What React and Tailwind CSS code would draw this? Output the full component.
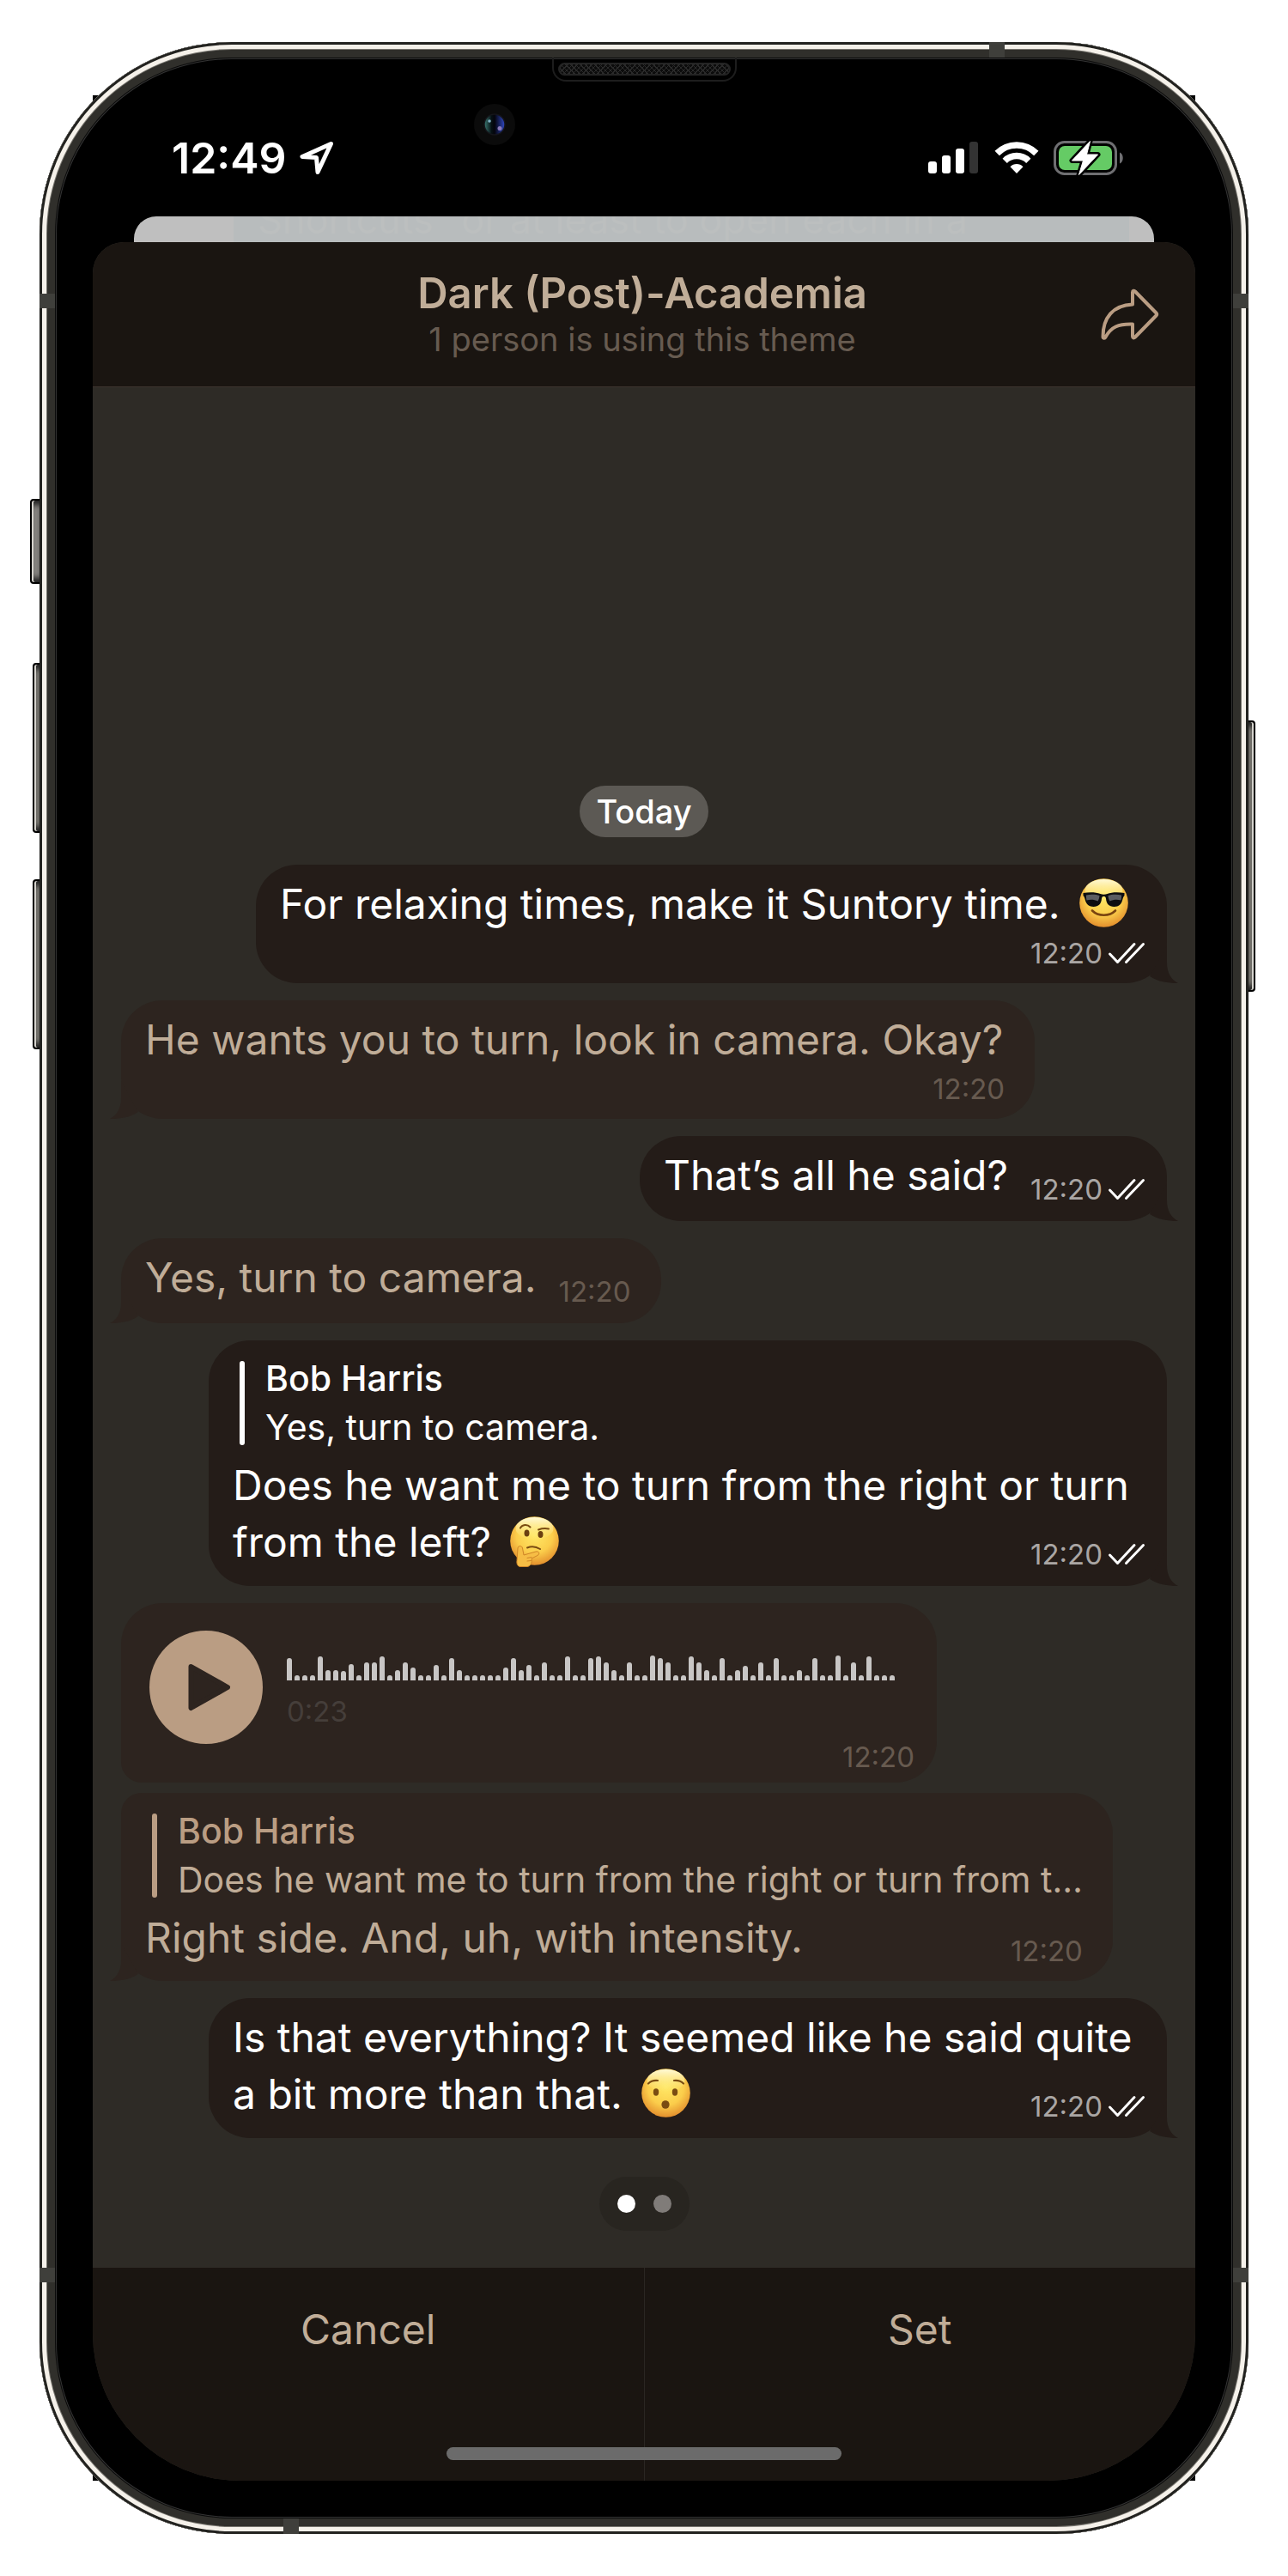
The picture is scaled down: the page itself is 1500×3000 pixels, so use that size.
const WAVE = [
  26, 6, 6, 6, 28, 12, 12, 11, 19, 6, 21, 21, 28, 6, 12, 21, 15, 6, 6, 18, 6, 26, 12, 6, 6, 6, 6, 6, 15, 26, 12, 18, 6,
  21, 6, 6, 28, 6, 6, 26, 28, 21, 12, 6, 21, 6, 6, 29, 26, 21, 6, 6, 28, 21, 12, 6, 26, 6, 12, 17, 6, 21, 6, 26, 6, 6,
  12, 6, 26, 6, 6, 29, 6, 21, 6, 28, 6, 6, 6,
];

function Face({ id, label, children }) {
  return (
    <svg viewBox="0 0 57 59" className="mx-[9px] inline-block h-[59px] w-[57px] align-[-12px]" role="img" aria-label={label}>
      <defs>
        <radialGradient id={id} cx="50%" cy="38%" r="62%">
          <stop offset="0" stopColor="#ffe866" />
          <stop offset="0.6" stopColor="#fbcd4b" />
          <stop offset="1" stopColor="#e38f2d" />
        </radialGradient>
        <linearGradient id={id + "-shine"} x1="0" y1="0" x2="0" y2="1">
          <stop offset="0" stopColor="#fffce0" stopOpacity="0.95" />
          <stop offset="1" stopColor="#fff38a" stopOpacity="0" />
        </linearGradient>
      </defs>
      <circle cx="28.5" cy="28.5" r="28.3" fill={`url(#${id})`} />
      <ellipse cx="28.5" cy="14" rx="22" ry="13" fill={`url(#${id}-shine)`} />
      {children}
    </svg>
  );
}

function Sunglasses() {
  return (
    <Face id="cool" label="😎">
      <path d="M4.5 17c7-1 15-1 20 1 2.500 1 5.500 1 8 0 5-2 13-2 20-1v3c-1 1-1.500 2-2 4-1.200 6-4.500 9-10 9-6 0-9-3.500-9.500-9.500C30.700 21.500 29.800 21 28.500 21s-2.200.5-2.500 2.500C25.500 29.500 22.500 33 16.500 33c-5.500 0-8.800-3-10-9-.5-2-1-3-2-4z" fill="#0d0e10" />
      <path d="M8 19.500c5-1 11-1 15.500.5-.2 3-1 5-2 6.500-4-2-9-2-13-1-.3-1.500-.7-4-.5-6zM49 19.500c-5-1-11-1-15.500.5.2 3 1 5 2 6.500 4-2 9-2 13-1 .3-1.500.7-4 .5-6z" fill="#5b5d61" />
      <path d="M15 37.500c7 7 20 7 27 0" fill="none" stroke="#7a4410" strokeWidth="2.600" strokeLinecap="round" />
    </Face>
  );
}

function Thinking() {
  return (
    <Face id="think" label="🤔">
      <g fill="none" stroke="#7a4c12" strokeLinecap="round" strokeWidth="2">
        <path d="M12 13.500c2-4 8-5 11.500-1" />
        <path d="M33 15.500c4-1.500 8-1.800 12-1" />
        <path d="M20 36.500c5-2 10-1.500 15 1.500" />
      </g>
      <ellipse cx="19.500" cy="19.500" rx="3" ry="4" fill="#6b3f10" />
      <ellipse cx="35.500" cy="21" rx="3" ry="4" fill="#6b3f10" />
      <path d="M9 37c0-3 5-3.500 5.500 0l1.500 8 14-4c4-1 5 3 2 4.500l-7 3.500c1 5-1 9-5 9.500H12c-3 0-4.500-3-4-7z" fill="#f6bd45" stroke="#cf8527" strokeWidth="1" />
      <path d="M20 48.500l5-1M20 52l4.500-.5" fill="none" stroke="#cf8527" strokeWidth="1" strokeLinecap="round" />
    </Face>
  );
}

function Hushed() {
  return (
    <Face id="hush" label="😯">
      <g fill="none" stroke="#7a4c12" strokeLinecap="round" strokeWidth="2.200">
        <path d="M8 17.500c3-3 6.500-4 11-3.500" />
        <path d="M49 17.500c-3-3-6.500-4-11-3.500" />
      </g>
      <ellipse cx="17" cy="27.500" rx="3.200" ry="4.200" fill="#7a4c12" />
      <ellipse cx="39" cy="27.500" rx="3.200" ry="4.200" fill="#7a4c12" />
      <ellipse cx="28" cy="42" rx="4.600" ry="4.800" fill="#7a4c12" />
    </Face>
  );
}

function Checks() {
  return (
    <svg viewBox="0 0 44 26" className="h-[26px] w-[44px]" fill="none" stroke="#fff" strokeWidth="3" strokeLinecap="round" strokeLinejoin="round" aria-hidden="true">
      <path d="M2.500 14 11.500 23.500 31 2.500M21.500 23.500 41.500 2.500" />
    </svg>
  );
}

function Tail({ out }) {
  return out ? (
    <svg viewBox="0 0 36 44" className="absolute -right-[13px] bottom-0 h-[44px] w-[36px]" fill="#241c18" aria-hidden="true">
      <path d="M23 0V20C23 32 28 40 36 44C23 44 12 42 3 36Z" />
    </svg>
  ) : (
    <svg viewBox="0 0 36 44" className="absolute bottom-0 -left-[13px] h-[44px] w-[36px]" fill="#2d241f" aria-hidden="true">
      <path d="M13 0V20C13 32 8 40 0 44C13 44 24 42 33 36Z" />
    </svg>
  );
}

function Bubble({ out, tail = true, className = "", children }) {
  return (
    <div
      className={
        "relative pl-[28px] text-[48px] leading-[66px] " +
        (out ? "self-end bg-[#241c18] pr-[25px] text-white " : "self-start bg-[#2d241f] pr-[35px] text-[#c0ad98] ") +
        className
      }
    >
      {tail && <Tail out={out} />}
      {children}
    </div>
  );
}

function Meta({ out, className = "" }) {
  return (
    <span className={"flex items-center gap-[6px] text-[33px] leading-[40px] " + (out ? "text-[#aaa6a4] " : "text-[#675a4f] ") + className}>
      <time>12:20</time>
      {out && <Checks />}
    </span>
  );
}

function Quote({ out, text }) {
  return (
    <blockquote className="mt-[3px] mb-[6px] ml-2 flex gap-6 text-[41px] leading-[57px]">
      <span className={"my-2 w-[6px] rounded-full " + (out ? "bg-white" : "bg-[#ba9d83]")} />
      <div className="min-w-0 flex-1">
        <p className={"font-medium " + (out ? "text-white" : "text-[#ba9d83]")}>Bob Harris</p>
        <p className="truncate">{text}</p>
      </div>
    </blockquote>
  );
}

function StatusBar() {
  return (
    <div className="mt-[59px] mb-[38px] flex h-[60px] items-center justify-between pr-[82px] pl-[92px] text-white">
      <div className="flex items-center gap-[14px]">
        <time className="text-[50px] leading-[60px] font-semibold">12:49</time>
        <svg viewBox="0 0 42 40" className="h-[40px] w-[42px]" fill="none" stroke="#fff" strokeWidth="5" strokeLinejoin="round" aria-label="Location">
          <path d="M37.500 3.500 4 18.500 20.500 19.500 22 36.500Z" />
        </svg>
      </div>
      <div className="flex items-center gap-[17px]">
        <svg viewBox="0 0 60 40" className="h-[40px] w-[60px]" fill="#fff" aria-label="Signal">
          <rect x="0" y="24" width="10" height="14" rx="3" />
          <rect x="16" y="17" width="10" height="21" rx="3" />
          <rect x="32" y="9" width="10" height="29" rx="3" />
          <rect x="48" y="1" width="10" height="37" rx="3" fill="#333" />
        </svg>
        <svg viewBox="0 0 52 40" className="h-[40px] w-[52px]" aria-label="Wi-Fi">
          <g fill="none" stroke="#fff" strokeWidth="7.500">
            <path d="M3.200 14.500a32 32 0 0 1 45.600 0" />
            <path d="M12.200 23.300a19.600 19.600 0 0 1 27.600 0" />
          </g>
          <path d="M26 38l-7.500-7.800a10.500 10.500 0 0 1 15 0z" fill="#fff" />
        </svg>
        <svg viewBox="0 0 83 42" className="h-[42px] w-[83px]" aria-label="Battery charging">
          <rect x="1.500" y="2.500" width="71" height="37" rx="11" fill="none" stroke="#6f6f72" strokeWidth="3" />
          <path d="M77 14.500c5 2 5 11 0 13z" fill="#6f6f72" />
          <rect x="6" y="7" width="62" height="28" rx="7" fill="#65cb65" />
          <path d="M42.500 1.500 21.500 24H34.500L29.500 40.500 51.500 17H38.500Z" fill="#000" stroke="#000" strokeWidth="6" strokeLinejoin="round" />
          <path d="M42.500 1.500 21.500 24H34.500L29.500 40.500 51.500 17H38.500Z" fill="#fff" stroke="#fff" strokeWidth="1" strokeLinejoin="round" />
        </svg>
      </div>
    </div>
  );
}

function Speaker() {
  return (
    <div className="mx-auto h-[28px] w-[215px] rounded-b-[16px] border-2 border-t-0 border-[#1d1d1d] px-[5px] pt-[6px]">
      <div className="h-[15px] rounded-full border-2 border-[#242424] bg-[#0c0c0c] bg-[repeating-linear-gradient(45deg,#2a2a2a_0_1px,transparent_1px_4px),repeating-linear-gradient(-45deg,#2a2a2a_0_1px,transparent_1px_4px)]" />
    </div>
  );
}

function Camera() {
  return (
    <svg viewBox="0 0 50 50" className="absolute top-[71px] left-[505px] h-[50px] w-[50px]" aria-hidden="true">
      <defs>
        <linearGradient id="lens" x1="0" y1="0" x2="1" y2="0">
          <stop offset="0" stopColor="#3b7a73" />
          <stop offset="0.35" stopColor="#061013" />
          <stop offset="0.5" stopColor="#04040c" />
          <stop offset="1" stopColor="#3149c4" />
        </linearGradient>
      </defs>
      <circle cx="25" cy="25" r="24" fill="#0b0b0b" />
      <circle cx="25" cy="25" r="12" fill="url(#lens)" stroke="#15151a" strokeWidth="1.500" />
      <circle cx="19" cy="21" r="1.800" fill="#7fb0c4" />
      <circle cx="31" cy="29.500" r="2.500" fill="#8a7ab8" />
    </svg>
  );
}

function Hardware() {
  const key = "absolute border-2 border-black ";
  return (
    <div aria-hidden="true">
      <div className="absolute inset-[62px] bg-black" />
      <div className={key + "top-[532px] -left-[11px] h-[99px] w-[14px] rounded-l-[4px] bg-[#85837f] shadow-[inset_2px_0_0_#d5d3cd,inset_0_8px_6px_-3px_#222,inset_0_-8px_6px_-3px_#222]"} />
      <div className={key + "top-[723px] -left-[8px] h-[198px] w-[11px] rounded-l-[4px] bg-[#77756f] shadow-[inset_2px_0_0_#d5d3cd,inset_0_8px_6px_-3px_#222,inset_0_-8px_6px_-3px_#222]"} />
      <div className={key + "top-[975px] -left-[8px] h-[198px] w-[11px] rounded-l-[4px] bg-[#77756f] shadow-[inset_2px_0_0_#d5d3cd,inset_0_8px_6px_-3px_#222,inset_0_-8px_6px_-3px_#222]"} />
      <div className={key + "top-[790px] -right-[8px] h-[316px] w-[11px] rounded-r-[4px] bg-[#77756f] shadow-[inset_-2px_0_0_#d5d3cd,inset_0_8px_6px_-3px_#222,inset_0_-8px_6px_-3px_#222]"} />
    </div>
  );
}

function Bands() {
  return (
    <div aria-hidden="true">
      <div className="absolute top-[293px] left-0 h-[17px] w-[18px] bg-[#3f3f3b]" />
      <div className="absolute top-[293px] right-0 h-[17px] w-[18px] bg-[#3f3f3b]" />
      <div className="absolute bottom-[293px] left-0 h-[17px] w-[18px] bg-[#3f3f3b]" />
      <div className="absolute right-0 bottom-[293px] h-[17px] w-[18px] bg-[#3f3f3b]" />
      <div className="absolute top-0 right-[284px] h-[18px] w-[18px] bg-[#3f3f3b]" />
      <div className="absolute bottom-0 left-[284px] h-[18px] w-[18px] bg-[#3f3f3b]" />
    </div>
  );
}

function Header() {
  return (
    <header className="relative rounded-t-[36px] border-b border-[#3d342f] bg-[#1a1511] pt-[30px] pr-1 pb-[32px] text-center">
      <h1 className="text-[49px] leading-[60px] font-semibold text-[#c0ad98]">Dark (Post)-Academia</h1>
      <p className="text-[38px] leading-[46px] text-[#675b50]">1 person is using this theme</p>
      <button type="button" aria-label="Share theme" className="absolute top-[54px] right-[42px]">
        <svg viewBox="0 0 68 60" className="h-[60px] w-[68px]" fill="none" stroke="#ba9d83" strokeWidth="4" strokeLinejoin="round" strokeLinecap="round">
          <path d="M37 4.500C37 2.500 38.500 2.200 40 3.500L64.500 28.500Q66 30 64.500 31.500L40 56.500C38.500 58 37 57.500 37 55.500V41.500C20 41 12 45 5.500 56.500C4.500 58.500 2.500 58 2.500 56C2.500 34 14 19.500 37 18.500Z" />
        </svg>
      </button>
    </header>
  );
}

function VoiceMessage() {
  return (
    <Bubble tail={false} className="-mb-2 rounded-[48px] rounded-bl-[24px] pt-[32px] pb-[10px]">
      <div className="flex gap-[28px] pr-[14px] pl-[5px]">
        <button type="button" aria-label="Play" className="flex h-[132px] w-[132px] shrink-0 items-center justify-center rounded-full bg-[#ba9d83]">
          <svg viewBox="0 0 50 56" className="ml-[8px] h-[56px] w-[50px]" fill="#2d241f" stroke="#2d241f" strokeWidth="6" strokeLinejoin="round">
            <path d="M3.500 4 46 28 3.500 52Z" />
          </svg>
        </button>
        <div>
          <svg viewBox="0 0 708 30" className="mt-[28px] h-[30px] w-[708px]" fill="#c8c6c5" aria-label="Waveform">
            {WAVE.map((h, i) => (
              <path key={i} d={`M${i * 9} 30V${33 - h}a3 3 0 0 1 6 0V30z`} />
            ))}
          </svg>
          <p className="mt-[16px] text-[33px] leading-[40px] text-[#453e3a]">0:23</p>
        </div>
      </div>
      <Meta className="-mt-[5px] -mr-[9px] justify-end" />
    </Bubble>
  );
}

const ROUND = "max-w-[1116px] rounded-[48px] pt-[13px] ";

export default function App() {
  return (
    <main className="bg-white px-[46px] py-[49px] font-['Inter','Liberation_Sans',sans-serif]">
      <div className="relative">
        <Hardware />
        <div className="relative overflow-hidden rounded-[224px] bg-black px-[62px] pt-[18px] pb-[62px] shadow-[inset_0_0_0_3px_#22221f,inset_0_0_0_8px_#f5f1ea,inset_0_0_0_9px_#77756f,inset_0_0_0_18px_#302f2b,inset_0_0_0_19px_#0a0a0a,inset_0_0_0_20px_#333]">
          <Bands />
          <Speaker />
          <Camera />
          <StatusBar />
          <div className="mx-[48px] h-[66px] overflow-hidden rounded-t-[26px] bg-[#bfbfbf] pr-[29px] pl-[116px]">
            <div className="h-full bg-[#b8bcbd] pl-[28px]">
              <p className="-mt-[24px] text-[45px] leading-[56px] whitespace-nowrap text-[#bcbfbf]">Shortcuts” or at least to open each in a</p>
            </div>
          </div>
          <div className="relative -mt-[36px] overflow-hidden rounded-t-[36px] rounded-b-[172px] bg-[#2e2b26]">
            <Header />
            <section className="flex flex-col gap-5 px-[33px] pt-[464px] pb-[43px]">
              <p className="mb-[12px] self-center rounded-full bg-[#5c5954] px-[19px] text-[38px] leading-[60px] font-medium text-white">Today</p>

              <Bubble out className={ROUND + "pb-[15px]"}>
                <p className="mr-[11px]">
                  For relaxing times, make it Suntory time. <Sunglasses />
                </p>
                <Meta out className="mt-1 justify-end" />
              </Bubble>

              <Bubble className={ROUND + "pb-[15px]"}>
                <p className="mr-[2px]">He wants you to turn, look in camera. Okay?</p>
                <Meta className="mt-1 justify-end" />
              </Bubble>

              <Bubble out className={ROUND + "flex items-end gap-[26px] pb-[17px]"}>
                <p className="mb-[3px]">That’s all he said?</p>
                <Meta out />
              </Bubble>

              <Bubble className={ROUND + "flex items-end gap-[26px] pb-[17px]"}>
                <p className="mb-[3px]">Yes, turn to camera.</p>
                <Meta />
              </Bubble>

              <Bubble out className={ROUND + "pb-[17px]"}>
                <Quote out text="Yes, turn to camera." />
                <p>
                  Does he want me to turn from the right or turn from the left? <Thinking />
                  <Meta out className="float-right mt-[27px]" />
                </p>
              </Bubble>

              <VoiceMessage />

              <Bubble className="rounded-[48px] rounded-tl-[24px] pt-[13px] pb-[15px]">
                <Quote text="Does he want me to turn from the right or turn from t…" />
                <div className="flex items-end justify-between">
                  <p className="mb-[2px]">Right side. And, uh, with intensity.</p>
                  <Meta />
                </div>
              </Bubble>

              <Bubble out className={ROUND + "pb-[17px]"}>
                <p>
                  Is that everything? It seemed like he said quite a bit more than that. <Hushed />
                  <Meta out className="float-right mt-[27px]" />
                </p>
              </Bubble>

              <div className="mt-[25px] flex h-[63px] items-center gap-[21px] self-center rounded-full bg-[#282520] px-[21px]">
                <button type="button" aria-label="Page 1" className="h-[21px] w-[21px] rounded-full bg-white" />
                <button type="button" aria-label="Page 2" className="h-[21px] w-[21px] rounded-full bg-[#807c79]" />
              </div>
            </section>
            <footer className="relative flex h-[248px] bg-[#1a1511] text-[48px] leading-[60px] text-[#c0ad98]">
              <button type="button" className="flex flex-1 items-start justify-center border-r border-[#2a2622] pt-[42px]">
                Cancel
              </button>
              <button type="button" className="flex flex-1 items-start justify-center pt-[42px]">
                Set
              </button>
              <div className="absolute inset-x-[412px] bottom-[24px] h-[15px] rounded-full bg-[#6b6b6b]" />
            </footer>
          </div>
        </div>
      </div>
    </main>
  );
}
